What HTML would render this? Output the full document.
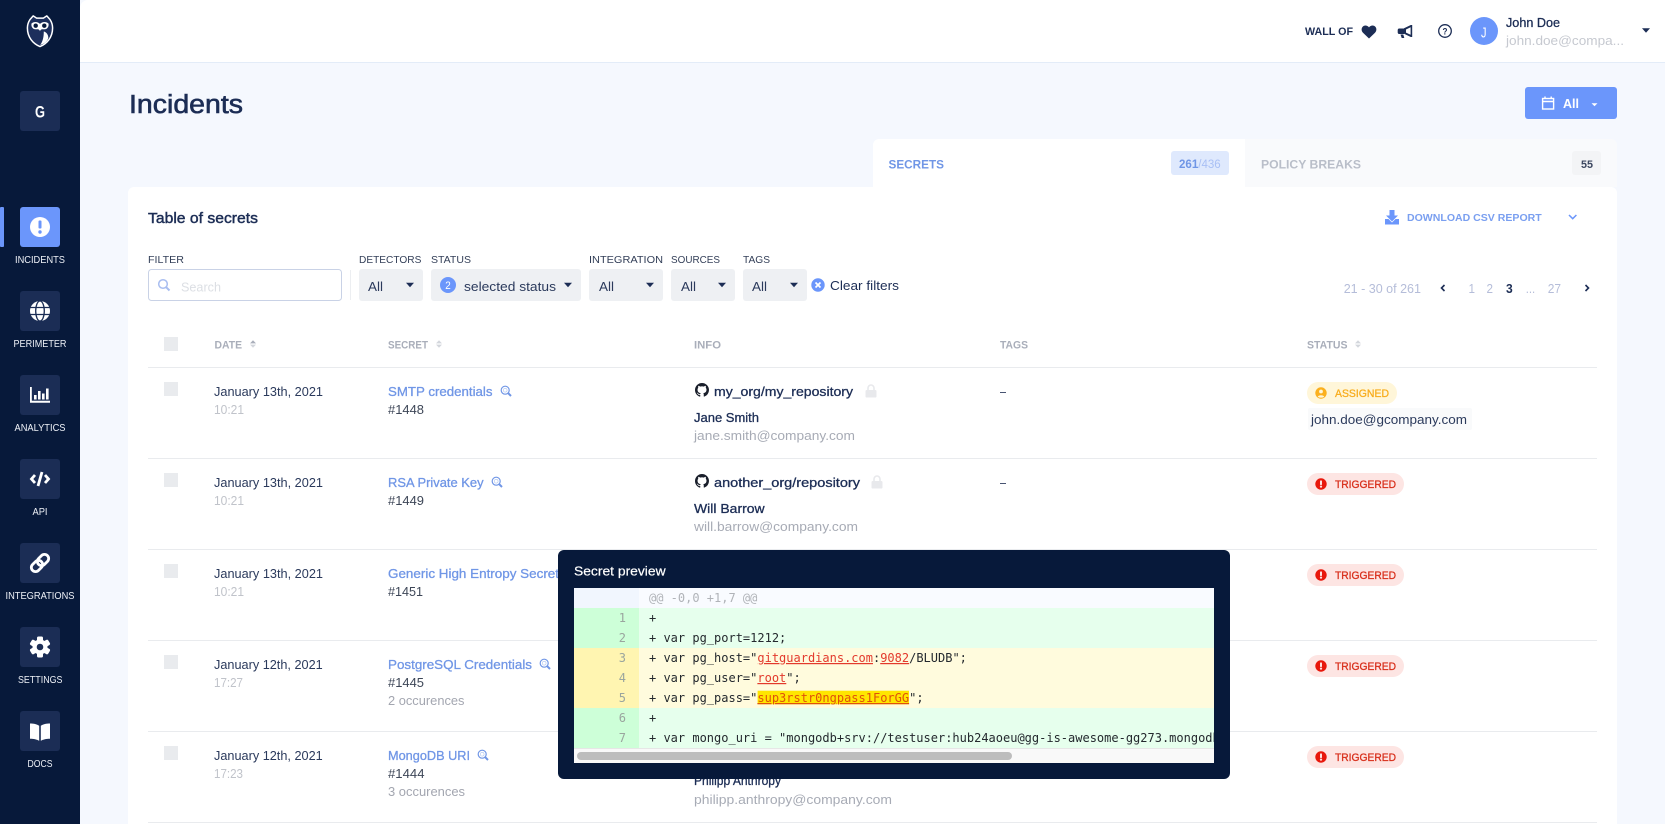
<!DOCTYPE html>
<html lang="en">
<head>
<meta charset="utf-8">
<title>Incidents</title>
<style>
html,body{margin:0;padding:0;background:#f5f8fe;}
svg{display:block;}
text{font-family:"Liberation Sans",sans-serif;font-size:13px;}
.m{stroke:currentColor;stroke-width:.3;}
.nav{font-size:10.5px;fill:#eef1f7;}
.lbl{font-size:10.5px;fill:#333f58;}
.th{font-size:11px;font-weight:bold;fill:#a9aeba;}
.d{fill:#2b3a5c;}
.t{fill:#c0c3ca;}
.lk{fill:#7096e6;color:#7096e6;}
.id{fill:#3d4657;}
.oc{fill:#a3a6b0;}
.nm{fill:#1c2d55;color:#1c2d55;}
.em{fill:#a7abb5;}
.tg{font-size:11px;fill:#d8301c;color:#d8301c;}
.pg{fill:#b5bdd9;}
.code{font-family:"DejaVu Sans Mono",monospace;font-size:12px;fill:#24292e;white-space:pre;}
.num{font-family:"DejaVu Sans Mono",monospace;font-size:12px;fill:#9aa59e;text-anchor:end;}
.r{fill:#e3392c;text-decoration:underline;}
.y{fill:#e0500a;text-decoration:underline;}
</style>
</head>
<body>
<svg xmlns="http://www.w3.org/2000/svg" width="1665" height="824" viewBox="0 0 1665 824">
<defs>
<path id="gh" fill="#1a1f2b" d="M8 0C3.58 0 0 3.58 0 8c0 3.54 2.29 6.53 5.47 7.59.4.07.55-.17.55-.38 0-.19-.01-.82-.01-1.49-2.01.37-2.53-.49-2.69-.94-.09-.23-.48-.94-.82-1.13-.28-.15-.68-.52-.01-.53.63-.01 1.08.58 1.23.82.72 1.21 1.87.87 2.33.66.07-.52.28-.87.51-1.07-1.78-.2-3.64-.89-3.64-3.95 0-.87.31-1.59.82-2.15-.08-.2-.36-1.02.08-2.12 0 0 .67-.21 2.2.82.64-.18 1.32-.27 2-.27.68 0 1.36.09 2 .27 1.53-1.04 2.2-.82 2.2-.82.44 1.1.16 1.92.08 2.12.51.56.82 1.27.82 2.15 0 3.07-1.87 3.75-3.65 3.95.29.25.54.73.54 1.48 0 1.07-.01 1.93-.01 2.2 0 .21.15.46.55.38A8.013 8.013 0 0016 8c0-4.42-3.58-8-8-8z"/>
<g id="lock"><path d="M-3 0v-2.5a3 3 0 0 1 6 0V0" fill="none" stroke="#e8e9ec" stroke-width="1.6"/><rect x="-5.5" y="-.5" width="11" height="7.5" rx="1.3" fill="#e8e9ec"/></g>
<g id="mag" fill="none" stroke="#7096e6"><circle cx="-.8" cy="-.8" r="4" stroke-width="1.2"/><path d="M2.2 2.2L5 5" stroke-width="2"/><circle cx="-.8" cy="-.8" r="1.900" stroke-width=".6" opacity=".6"/></g>
<path id="car" d="M-4-2.2h8L0 2.2z" fill="#1c2d55"/>
<g id="sort"><path d="M0-3.800L3-.6H-3z" fill="#d3d6dc"/><path d="M0 3.800L3 .6H-3z" fill="#d3d6dc"/></g>
<g id="trig"><rect x="-14" y="-11" width="97" height="22" rx="11" fill="#fde5e3"/><circle r="5.7" fill="#e8180c"/><rect x="-1" y="-3.6" width="2" height="4.6" rx=".8" fill="#fde5e3"/><circle cy="2.6" r="1.1" fill="#fde5e3"/><text class="tg m" x="14" y="4" textLength="61" lengthAdjust="spacingAndGlyphs">TRIGGERED</text></g>
<clipPath id="cc"><rect x="574" y="588" width="640" height="160"/></clipPath>
</defs>

<rect width="1665" height="824" fill="#f5f8fe"/>

<!-- sidebar -->
<rect width="80" height="824" fill="#07193a"/>
<rect x="0" y="207" width="4" height="40" rx="1" fill="#6b96fb"/>

<!-- logo -->
<g>
<path d="M30 19.5l3.2-3.6 3.4 2.2h6.8l3.4-2.2 3.2 3.6c1.6 2.5 2.6 5 2.6 8.5 0 9.5-5.8 15.7-12.6 18.6C33.2 43.7 27.4 37.500 27.400 28c0-3.500 1-6 2.600-8.500z" fill="#1d2f5c" stroke="#fff" stroke-width="1.500" stroke-linejoin="round"/>
<path d="M31.500 23.500c2.400-2.200 6.300-1.900 8.500.4 2.200-2.300 6.100-2.600 8.500-.4.600 3-1.100 5.500-3.700 5.800-2.200.2-3.800-.7-4.800 2-1-2.700-2.600-1.800-4.800-2-2.600-.3-4.300-2.800-3.700-5.800z" fill="#fff"/>
<circle cx="35.700" cy="25.700" r="2.200" fill="#07193a"/><circle cx="44.300" cy="25.700" r="2.200" fill="#07193a"/>
<path d="M40.200 45c2.600-3.500 3.600-8 3.600-13.500 2.300.6 4.700 3 4.500 6.500-.7 3.200-4.300 6-8.100 7z" fill="#fff"/>
</g>

<!-- nav buttons -->
<g fill="#1b2d55">
<rect x="20" y="91" width="40" height="40" rx="3"/>
<rect x="20" y="291" width="40" height="40" rx="3"/>
<rect x="20" y="375" width="40" height="40" rx="3"/>
<rect x="20" y="459" width="40" height="40" rx="3"/>
<rect x="20" y="543" width="40" height="40" rx="3"/>
<rect x="20" y="627" width="40" height="40" rx="3"/>
<rect x="20" y="711" width="40" height="40" rx="3"/>
</g>
<rect x="20" y="207" width="40" height="40" rx="3" fill="#6b96fb"/>
<text x="35" y="117.300" font-weight="bold" style="font-size:16.500px" fill="#fff" textLength="10" lengthAdjust="spacingAndGlyphs">G</text>

<!-- incidents icon -->
<circle cx="40" cy="227" r="10" fill="#fff"/>
<rect x="38.500" y="220.500" width="3" height="8" rx="1" fill="#6b96fb"/><circle cx="40" cy="232" r="1.700" fill="#6b96fb"/>
<!-- globe -->
<circle cx="40" cy="311" r="10" fill="#fff"/>
<g fill="none" stroke="#1b2d55" stroke-width="1.300"><ellipse cx="40" cy="311" rx="4.300" ry="10"/><path d="M30 307.500h20M30 314.500h20"/></g>
<!-- analytics -->
<g fill="#fff"><path d="M30 387h1.800v13.800H50v2H30z"/><rect x="34" y="395" width="2.600" height="4.500"/><rect x="38" y="391" width="2.600" height="8.500"/><rect x="42" y="393.500" width="2.600" height="6"/><rect x="46" y="388.500" width="2.600" height="11"/></g>
<!-- api -->
<g fill="none" stroke="#fff" stroke-width="2.800"><path d="M35 475L31.500 479l3.500 4M45 475l3.500 4-3.500 4M42 472L38 486"/></g>
<!-- link -->
<g fill="none" stroke="#fff" stroke-width="2.800" transform="rotate(-45 40 563)"><rect x="29.500" y="558.800" width="12.500" height="8.400" rx="4.200"/><rect x="38" y="558.800" width="12.500" height="8.400" rx="4.200"/></g>
<!-- gear -->
<g fill="#fff"><rect x="37" y="636.500" width="6" height="21" rx="1.500"/><rect x="37" y="636.500" width="6" height="21" rx="1.500" transform="rotate(60 40 647)"/><rect x="37" y="636.500" width="6" height="21" rx="1.500" transform="rotate(120 40 647)"/><circle cx="40" cy="647" r="7.500"/></g>
<circle cx="40" cy="647" r="3.300" fill="#1b2d55"/>
<!-- book -->
<path d="M30 723.500c3.500 0 7 .6 9.200 2.300v15c-2.200-1.400-5.700-2.100-9.200-2.100zM50 723.500c-3.500 0-7 .6-9.200 2.300v15c2.200-1.400 5.700-2.100 9.200-2.100z" fill="#fff"/>

<text class="nav" x="15" y="263" textLength="50" lengthAdjust="spacingAndGlyphs">INCIDENTS</text>
<text class="nav" x="13.500" y="347" textLength="53" lengthAdjust="spacingAndGlyphs">PERIMETER</text>
<text class="nav" x="14.500" y="431" textLength="51" lengthAdjust="spacingAndGlyphs">ANALYTICS</text>
<text class="nav" x="32.500" y="515" textLength="15" lengthAdjust="spacingAndGlyphs">API</text>
<text class="nav" x="5.500" y="599" textLength="69" lengthAdjust="spacingAndGlyphs">INTEGRATIONS</text>
<text class="nav" x="18" y="683" textLength="44.500" lengthAdjust="spacingAndGlyphs">SETTINGS</text>
<text class="nav" x="27.500" y="767" textLength="25" lengthAdjust="spacingAndGlyphs">DOCS</text>

<!-- header -->
<path d="M88 0H1665V62H80V8a8 8 0 0 1 8-8z" fill="#fff"/>
<rect x="80" y="62" width="1585" height="1" fill="#e3ecf8"/>
<text x="1305" y="35" font-weight="bold" style="font-size:11px" fill="#1c2d55" textLength="48" lengthAdjust="spacingAndGlyphs">WALL OF</text>
<path d="M1369 38.500l-6-5.800c-1.800-1.800-1.800-4.500-.2-6.100 1.700-1.600 4.500-1.400 6.200.8 1.700-2.200 4.500-2.400 6.200-.8 1.600 1.600 1.600 4.300-.2 6.100z" fill="#1c2d55"/>
<g fill="#1c2d55"><path d="M1399 28.500h5v5.500h-5a1.500 1.500 0 0 1-1.300-1.400v-2.700a1.500 1.500 0 0 1 1.300-1.400z"/><path d="M1400.500 34.500h2.800l1 3.500h-2.600z"/><path d="M1404 28.300l6.800-3.300h1.400v12h-1.400l-6.800-3.200zM1406 29.500v3.100l4.600 2.100v-7.400z" fill-rule="evenodd"/></g>
<circle cx="1445" cy="31" r="6.300" fill="none" stroke="#1c2d55" stroke-width="1.300"/>
<text x="1442.500" y="34.500" font-weight="bold" style="font-size:9.500px" fill="#1c2d55" textLength="5" lengthAdjust="spacingAndGlyphs">?</text>
<circle cx="1484" cy="31" r="14" fill="#6b96fb"/>
<text x="1481" y="37.500" style="font-size:15px" fill="#fff" textLength="5.500" lengthAdjust="spacingAndGlyphs">J</text>
<text class="nm m" x="1506" y="27" textLength="54" lengthAdjust="spacingAndGlyphs">John Doe</text>
<text x="1506" y="45" style="font-size:12.500px" fill="#c6c9d0" textLength="118" lengthAdjust="spacingAndGlyphs">john.doe@compa...</text>
<use href="#car" x="1646" y="30.500"/>

<!-- title -->
<text class="nm" x="129" y="113" style="font-size:25.500px;stroke-width:.6" stroke="#1c2d55" textLength="114" lengthAdjust="spacingAndGlyphs">Incidents</text>

<!-- all button -->
<rect x="1525" y="87" width="92" height="32" rx="3" fill="#6b96fb"/>
<g fill="none" stroke="#fff" stroke-width="1.400"><rect x="1542.600" y="98.500" width="11" height="10.500"/><path d="M1542.600 101.500h11M1545 96.500v2.500M1551.200 96.500v2.500"/></g>
<text x="1563" y="108" font-weight="bold" fill="#fff" textLength="16" lengthAdjust="spacingAndGlyphs">All</text>
<path d="M1591.500 103.300h6l-3 3z" fill="#fff"/>

<!-- tabs -->
<path d="M1245 139h366a6 6 0 0 1 6 6v42H1245z" fill="#f9fafc"/>
<rect x="128" y="187" width="1489" height="660" rx="6" fill="#fff"/>
<path d="M879 139h366v60H873v-54a6 6 0 0 1 6-6z" fill="#fff"/>
<text x="888.500" y="168.300" font-weight="bold" style="font-size:12px" fill="#7096e6" textLength="55.500" lengthAdjust="spacingAndGlyphs">SECRETS</text>
<rect x="1171" y="151" width="58" height="24" rx="3" fill="#dfe9fd"/>
<text x="1179" y="168" font-weight="bold" style="font-size:11.500px" fill="#7096e6" textLength="41.700" lengthAdjust="spacingAndGlyphs">261<tspan fill="#a9c0f5" font-weight="normal">/436</tspan></text>
<text x="1261" y="168.300" font-weight="bold" style="font-size:12px" fill="#b9bec9" textLength="100" lengthAdjust="spacingAndGlyphs">POLICY BREAKS</text>
<rect x="1572" y="151" width="29" height="24" rx="3" fill="#f3f4f6"/>
<text x="1581" y="168" font-weight="bold" style="font-size:11px" fill="#3c4760" textLength="12" lengthAdjust="spacingAndGlyphs">55</text>

<!-- card header -->
<text class="nm m" x="148" y="223.200" style="font-size:15px;stroke-width:.45" textLength="110" lengthAdjust="spacingAndGlyphs">Table of secrets</text>
<g fill="#6b96fb"><path d="M1389.500 210h5v5.500h3.500l-6 6-6-6h3.500z"/><path d="M1385 219h3.500l3.500 3.500 3.500-3.500h3.500v5.500h-14z"/></g>
<text x="1407" y="221" font-weight="bold" style="font-size:10.500px" fill="#7a9ff0" textLength="134.700" lengthAdjust="spacingAndGlyphs">DOWNLOAD CSV REPORT</text>
<path d="M1569 215l3.700 3.700 3.700-3.700" fill="none" stroke="#6b96fb" stroke-width="1.500"/>

<!-- filters -->
<text class="lbl" x="148" y="263" textLength="36" lengthAdjust="spacingAndGlyphs">FILTER</text>
<text class="lbl" x="359" y="263" textLength="62.400" lengthAdjust="spacingAndGlyphs">DETECTORS</text>
<text class="lbl" x="431" y="263" textLength="40" lengthAdjust="spacingAndGlyphs">STATUS</text>
<text class="lbl" x="589" y="263" textLength="74" lengthAdjust="spacingAndGlyphs">INTEGRATION</text>
<text class="lbl" x="671" y="263" textLength="49" lengthAdjust="spacingAndGlyphs">SOURCES</text>
<text class="lbl" x="743" y="263" textLength="27" lengthAdjust="spacingAndGlyphs">TAGS</text>

<rect x="148.500" y="269.500" width="193" height="31" rx="3" fill="#fff" stroke="#c9d2e6"/>
<g fill="none" stroke="#a8bdf0"><circle cx="163" cy="284" r="4.300" stroke-width="1.500"/><path d="M166.300 287.300l3.200 3.200" stroke-width="2"/></g>
<text x="181" y="291.300" fill="#dcdfe4" textLength="40" lengthAdjust="spacingAndGlyphs">Search</text>
<rect x="350" y="270" width="1" height="30" fill="#eceef1"/>

<g fill="#eef0f3">
<rect x="359" y="269" width="64" height="32" rx="3"/>
<rect x="431" y="269" width="150" height="32" rx="3"/>
<rect x="589" y="269" width="74" height="32" rx="3"/>
<rect x="671" y="269" width="64" height="32" rx="3"/>
<rect x="743" y="269" width="64" height="32" rx="3"/>
</g>
<text class="d" x="368" y="291" textLength="15" lengthAdjust="spacingAndGlyphs">All</text>
<use href="#car" x="410" y="285"/>
<circle cx="448" cy="285" r="8" fill="#6b96fb"/>
<text x="445.300" y="289" style="font-size:11px" fill="#fff" textLength="5.500" lengthAdjust="spacingAndGlyphs">2</text>
<text class="d" x="464" y="291" textLength="92" lengthAdjust="spacingAndGlyphs">selected status</text>
<use href="#car" x="568" y="285"/>
<text class="d" x="599" y="291" textLength="15" lengthAdjust="spacingAndGlyphs">All</text>
<use href="#car" x="650" y="285"/>
<text class="d" x="681" y="291" textLength="15" lengthAdjust="spacingAndGlyphs">All</text>
<use href="#car" x="722" y="285"/>
<text class="d" x="752" y="291" textLength="15" lengthAdjust="spacingAndGlyphs">All</text>
<use href="#car" x="794" y="285"/>
<circle cx="818" cy="285" r="6.700" fill="#6b96fb"/>
<path d="M815.500 282.500l5 5M820.500 282.500l-5 5" stroke="#fff" stroke-width="1.700"/>
<text x="830" y="290" fill="#1c2d55" textLength="69" lengthAdjust="spacingAndGlyphs">Clear filters</text>

<!-- pagination -->
<text class="pg" x="1343.700" y="293" textLength="77.300" lengthAdjust="spacingAndGlyphs">21 - 30 of 261</text>
<path d="M1444.500 285l-3 3 3 3M1585.500 285l3 3-3 3" fill="none" stroke="#1c2d55" stroke-width="1.600"/>
<text class="pg" x="1468.500" y="293" textLength="6.500" lengthAdjust="spacingAndGlyphs">1</text>
<text class="pg" x="1486.500" y="293" textLength="6.500" lengthAdjust="spacingAndGlyphs">2</text>
<text x="1506" y="293" font-weight="bold" fill="#1c2d55" textLength="6.700" lengthAdjust="spacingAndGlyphs">3</text>
<text class="pg" x="1525.700" y="293" textLength="9.500" lengthAdjust="spacingAndGlyphs">...</text>
<text class="pg" x="1547.700" y="293" textLength="13.300" lengthAdjust="spacingAndGlyphs">27</text>

<!-- table head -->
<rect x="164" y="337" width="14" height="14" fill="#e9ebee"/>
<text class="th" x="214.500" y="348.300" textLength="27.500" lengthAdjust="spacingAndGlyphs">DATE</text>
<g><path d="M253 340.200l3 3.200h-6z" fill="#a9aeba"/><path d="M253 347.800l3-3.200h-6z" fill="#d3d6dc"/></g>
<text class="th" x="388" y="348.300" textLength="40" lengthAdjust="spacingAndGlyphs">SECRET</text>
<use href="#sort" x="439" y="344"/>
<text class="th" x="694" y="348.300" textLength="27" lengthAdjust="spacingAndGlyphs">INFO</text>
<text class="th" x="1000" y="348.300" textLength="28" lengthAdjust="spacingAndGlyphs">TAGS</text>
<text class="th" x="1307" y="348.300" textLength="40.500" lengthAdjust="spacingAndGlyphs">STATUS</text>
<use href="#sort" x="1358" y="344"/>

<!-- row lines -->
<g fill="#e9ebee">
<rect x="148" y="367" width="1449" height="1"/>
<rect x="148" y="458" width="1449" height="1"/>
<rect x="148" y="549" width="1449" height="1"/>
<rect x="148" y="640" width="1449" height="1"/>
<rect x="148" y="731" width="1449" height="1"/>
<rect x="148" y="822" width="1449" height="1"/>
</g>

<!-- row 1 -->
<rect x="164" y="382" width="14" height="14" fill="#e9ebee"/>
<text class="d" x="214" y="396" textLength="109" lengthAdjust="spacingAndGlyphs">January 13th, 2021</text>
<text class="t" x="214" y="414" textLength="30" lengthAdjust="spacingAndGlyphs">10:21</text>
<text class="lk m" x="388" y="396" textLength="104.500" lengthAdjust="spacingAndGlyphs">SMTP credentials</text>
<use href="#mag" x="506" y="391"/>
<text class="id" x="388" y="414" textLength="36" lengthAdjust="spacingAndGlyphs">#1448</text>
<use href="#gh" transform="translate(695 383) scale(.875)"/>
<text class="nm m" x="714" y="396" textLength="139" lengthAdjust="spacingAndGlyphs">my_org/my_repository</text>
<use href="#lock" x="871" y="390.500"/>
<text class="nm m" x="694" y="422" textLength="65" lengthAdjust="spacingAndGlyphs">Jane Smith</text>
<text class="em" x="694" y="440" textLength="161" lengthAdjust="spacingAndGlyphs">jane.smith@company.com</text>
<text class="d" x="1000" y="396" textLength="6" lengthAdjust="spacingAndGlyphs">–</text>
<rect x="1307" y="382" width="90" height="22" rx="11" fill="#fff6d9"/>
<circle cx="1321" cy="393" r="5.700" fill="#fbb01e"/>
<circle cx="1321" cy="391.500" r="1.900" fill="#fff6d9"/>
<path d="M1317.800 396.700c.6-2 5.800-2 6.400 0-1.600 1.300-4.800 1.300-6.400 0z" fill="#fff6d9"/>
<text class="m" x="1335" y="397" style="font-size:11px;color:#f8ad1e" fill="#f8ad1e" textLength="54" lengthAdjust="spacingAndGlyphs">ASSIGNED</text>
<rect x="1308" y="408" width="164" height="22" rx="2" fill="#f9fafb"/>
<text class="d" x="1311" y="424" textLength="156" lengthAdjust="spacingAndGlyphs">john.doe@gcompany.com</text>

<!-- row 2 -->
<rect x="164" y="473" width="14" height="14" fill="#e9ebee"/>
<text class="d" x="214" y="487" textLength="109" lengthAdjust="spacingAndGlyphs">January 13th, 2021</text>
<text class="t" x="214" y="505" textLength="30" lengthAdjust="spacingAndGlyphs">10:21</text>
<text class="lk m" x="388" y="487" textLength="95.600" lengthAdjust="spacingAndGlyphs">RSA Private Key</text>
<use href="#mag" x="497" y="482"/>
<text class="id" x="388" y="505" textLength="36" lengthAdjust="spacingAndGlyphs">#1449</text>
<use href="#gh" transform="translate(695 474) scale(.875)"/>
<text class="nm m" x="714" y="487" textLength="146" lengthAdjust="spacingAndGlyphs">another_org/repository</text>
<use href="#lock" x="877" y="481.500"/>
<text class="nm m" x="694" y="513" textLength="70.600" lengthAdjust="spacingAndGlyphs">Will Barrow</text>
<text class="em" x="694" y="531" textLength="164" lengthAdjust="spacingAndGlyphs">will.barrow@company.com</text>
<text class="d" x="1000" y="487" textLength="6" lengthAdjust="spacingAndGlyphs">–</text>
<use href="#trig" x="1321" y="484"/>

<!-- row 3 -->
<rect x="164" y="564" width="14" height="14" fill="#e9ebee"/>
<text class="d" x="214" y="578" textLength="109" lengthAdjust="spacingAndGlyphs">January 13th, 2021</text>
<text class="t" x="214" y="596" textLength="30" lengthAdjust="spacingAndGlyphs">10:21</text>
<text class="lk m" x="388" y="578" textLength="171" lengthAdjust="spacingAndGlyphs">Generic High Entropy Secret</text>
<text class="id" x="388" y="596" textLength="35" lengthAdjust="spacingAndGlyphs">#1451</text>
<use href="#trig" x="1321" y="575"/>

<!-- row 4 -->
<rect x="164" y="655" width="14" height="14" fill="#e9ebee"/>
<text class="d" x="214" y="669" textLength="108.700" lengthAdjust="spacingAndGlyphs">January 12th, 2021</text>
<text class="t" x="214" y="687" textLength="29" lengthAdjust="spacingAndGlyphs">17:27</text>
<text class="lk m" x="388" y="669" textLength="144" lengthAdjust="spacingAndGlyphs">PostgreSQL Credentials</text>
<use href="#mag" x="545" y="664"/>
<text class="id" x="388" y="687" textLength="36" lengthAdjust="spacingAndGlyphs">#1445</text>
<text class="oc" x="388" y="705" textLength="76.500" lengthAdjust="spacingAndGlyphs">2 occurences</text>
<use href="#trig" x="1321" y="666"/>

<!-- row 5 -->
<rect x="164" y="746" width="14" height="14" fill="#e9ebee"/>
<text class="d" x="214" y="760" textLength="108.700" lengthAdjust="spacingAndGlyphs">January 12th, 2021</text>
<text class="t" x="214" y="778" textLength="29" lengthAdjust="spacingAndGlyphs">17:23</text>
<text class="lk m" x="388" y="760" textLength="82" lengthAdjust="spacingAndGlyphs">MongoDB URI</text>
<use href="#mag" x="483" y="755"/>
<text class="id" x="388" y="778" textLength="36.500" lengthAdjust="spacingAndGlyphs">#1444</text>
<text class="oc" x="388" y="796" textLength="77" lengthAdjust="spacingAndGlyphs">3 occurences</text>
<text class="nm m" x="694" y="785" textLength="87" lengthAdjust="spacingAndGlyphs">Philipp Anthropy</text>
<text class="em" x="694" y="804" textLength="198" lengthAdjust="spacingAndGlyphs">philipp.anthropy@company.com</text>
<use href="#trig" x="1321" y="757"/>

<!-- tooltip -->
<rect x="558" y="550" width="672" height="229" rx="6" fill="#07193a"/>
<text x="574" y="575.700" class="m" style="font-size:12.500px;color:#fff;stroke-width:.2" fill="#fff" textLength="91.600" lengthAdjust="spacingAndGlyphs">Secret preview</text>

<rect x="574" y="588" width="65" height="20" fill="#f1f6fe"/>
<rect x="639" y="588" width="575" height="20" fill="#f9fbff"/>
<rect x="574" y="608" width="65" height="40" fill="#cdffd8"/>
<rect x="639" y="608" width="575" height="40" fill="#e6ffed"/>
<rect x="574" y="648" width="65" height="60" fill="#fff5b1"/>
<rect x="639" y="648" width="575" height="60" fill="#fffbdd"/>
<rect x="574" y="708" width="65" height="40" fill="#cdffd8"/>
<rect x="639" y="708" width="575" height="40" fill="#e6ffed"/>
<rect x="574" y="748" width="640" height="15" fill="#f9f9f9"/>
<rect x="574" y="748" width="640" height="1" fill="#e6e6e6"/>
<rect x="577" y="752" width="435" height="8" rx="4" fill="#bdbdbd"/>
<rect x="757.600" y="690.700" width="151.400" height="13.600" fill="#ffe600"/>

<text class="num" x="626" y="622">1</text>
<text class="num" x="626" y="642">2</text>
<text class="num" x="626" y="662">3</text>
<text class="num" x="626" y="682">4</text>
<text class="num" x="626" y="702">5</text>
<text class="num" x="626" y="722">6</text>
<text class="num" x="626" y="742">7</text>
<g clip-path="url(#cc)">
<text class="code" x="649" y="602" style="fill:#b0b3b8">@@ -0,0 +1,7 @@</text>
<text class="code" x="649" y="622">+</text>
<text class="code" x="649" y="642">+ var pg_port=1212;</text>
<text class="code" x="649" y="662" xml:space="preserve">+ var pg_host="<tspan class="r">gitguardians.com</tspan>:<tspan class="r">9082</tspan>/BLUDB";</text>
<text class="code" x="649" y="682" xml:space="preserve">+ var pg_user="<tspan class="r">root</tspan>";</text>
<text class="code" x="649" y="702" xml:space="preserve">+ var pg_pass="<tspan class="y">sup3rstr0ngpass1ForGG</tspan>";</text>
<text class="code" x="649" y="722">+</text>
<text class="code" x="649" y="742">+ var mongo_uri = "mongodb+srv://testuser:hub24aoeu@gg-is-awesome-gg273.mongodb.net/test";</text>
</g>
</svg>
</body>
</html>
